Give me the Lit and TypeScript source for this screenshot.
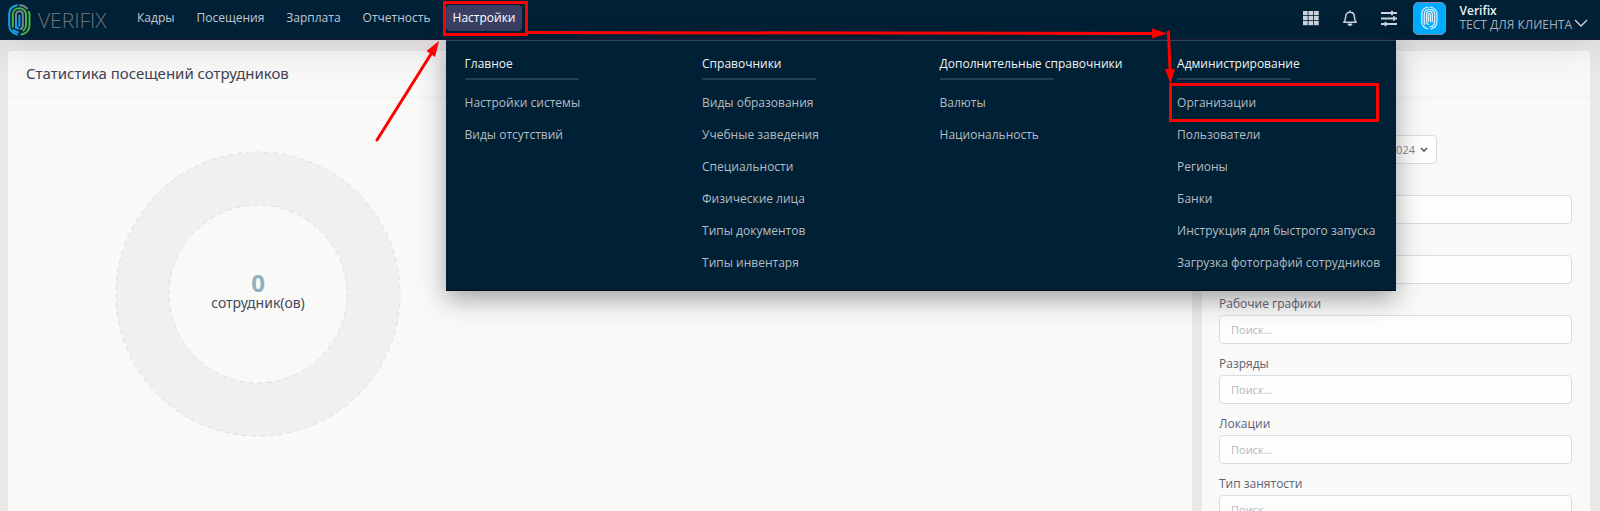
import { LitElement, html, css, svg } from "lit";
import { customElement } from "lit/decorators.js";

interface MenuGroup {
  title: string;
  items: string[];
}

const NAV = ["Кадры", "Посещения", "Зарплата", "Отчетность"];

const GROUPS: MenuGroup[] = [
  { title: "Главное", items: ["Настройки системы", "Виды отсутствий"] },
  {
    title: "Справочники",
    items: [
      "Виды образования",
      "Учебные заведения",
      "Специальности",
      "Физические лица",
      "Типы документов",
      "Типы инвентаря",
    ],
  },
  { title: "Дополнительные справочники", items: ["Валюты", "Национальность"] },
  {
    title: "Администрирование",
    items: [
      "Организации",
      "Пользователи",
      "Регионы",
      "Банки",
      "Инструкция для быстрого запуска",
      "Загрузка фотографий сотрудников",
    ],
  },
];

const FILTERS = [
  "Подразделения",
  "Должности",
  "Рабочие графики",
  "Разряды",
  "Локации",
  "Тип занятости",
];

@customElement("app-header")
export class AppHeader extends LitElement {
  static styles = css`
    :host {
      display: block;
      position: relative;
      z-index: 2;
      flex: none;
    }
    .bar {
      display: flex;
      align-items: center;
      height: 40px;
      padding: 0 12px 0 8px;
      box-sizing: border-box;
      background: #002035;
      border-bottom: 1px solid #1b1a3c;
      box-shadow: 0 4px 40px rgba(60, 50, 60, 0.16);
    }
    .logo {
      display: flex;
      align-items: center;
      gap: 7px;
      width: 122px;
      height: 36px;
      color: #6f7276;
      font: 300 21px/36px "Open Sans", sans-serif;
      text-decoration: none;
    }
    .logo svg {
      flex: none;
    }
    .nav {
      display: flex;
      gap: 8px;
      flex: 1;
      height: 100%;
      align-items: center;
      padding-bottom: 4px;
      box-sizing: border-box;
    }
    .link {
      display: block;
      padding: 0 7px;
      border: 0;
      border-radius: 4px;
      background: none;
      color: #c1c8d3;
      font: 500 12px/26px "Open Sans", sans-serif;
      text-decoration: none;
      cursor: pointer;
    }
    .active {
      background: #3a3f63;
      color: #fff;
    }
    .tools {
      display: flex;
      align-items: center;
      height: 100%;
      padding-bottom: 3px;
      box-sizing: border-box;
      gap: 12px;
    }
    .icons {
      display: flex;
      gap: 15px;
    }
    .tool {
      display: block;
      width: 24px;
      height: 24px;
      padding: 3px;
      border: 0;
      background: none;
      color: #cdd2dc;
    }
    .tool svg {
      display: block;
    }
    .account {
      display: flex;
      align-items: center;
      gap: 2px;
      padding: 0;
      border: 0;
      background: none;
      color: #a6adbb;
      text-align: left;
      font: 400 12px/14px "Open Sans", sans-serif;
    }
    .avatar {
      display: grid;
      place-items: center;
      width: 33px;
      height: 33px;
      margin-right: 12px;
      border: 1px solid #7f8a9b;
      border-radius: 5px;
      background: #00aaff;
      box-sizing: border-box;
    }
    .name {
      display: block;
      color: #eef1f5;
      font-weight: 600;
    }
    .chevron {
      align-self: flex-end;
    }
    .menu-anchor {
      position: relative;
    }
    .menu {
      position: absolute;
      top: 35px;
      left: 0;
      width: 950px;
      box-sizing: border-box;
      display: grid;
      grid-template-columns: repeat(4, 1fr);
      padding-bottom: 11px;
      border-top: 1px solid #2d4454;
      border-bottom: 1px solid #000b16;
      background: #002035;
      box-shadow: 0 8px 24px rgba(30, 30, 40, 0.4);
    }
    .group {
      padding: 12px 0 0 19px;
      min-width: 0;
    }
    .title {
      margin: 0;
      color: #f0f3f1;
      font: 500 12px/22px "Open Sans", sans-serif;
      white-space: nowrap;
    }
    .title::after {
      content: "";
      display: block;
      width: 114px;
      height: 2px;
      margin-top: 3px;
      background: #263e52;
    }
    .list {
      margin: 7px 0 0;
      padding: 0;
      list-style: none;
    }
    .item {
      color: #b4bdc2;
      font: 500 12px/32px "Open Sans", sans-serif;
      text-decoration: none;
      white-space: nowrap;
      display: block;
    }
  `;

  render() {
    return html`
      <header class="bar">
        <a class="logo" href="#" aria-label="Verifix">
          <svg width="23" height="32" viewBox="0 0 23 32" fill="none" stroke-width="2" stroke-linecap="round">
            <path d="M9 1.200C4.500 2.200 1.200 5.500 1.200 10v11c0 4.500 3.300 8.300 8 9.600" stroke="#19a0e8" />
            <path d="M12 1.200c3 .2 5.500 1.600 7 3.300" stroke="#6f8794" />
            <path d="M20.800 8c.5 1 .7 2 .7 3.500V21c0 5-3.500 8.600-8 9.600" stroke="#4bb648" />
            <path d="M4.800 23V10.500c0-4 3-6.300 6.600-6.300s6.600 2.500 6.600 6.300V21c0 2-.8 4-2.500 5.500" stroke="#4bb648" />
            <path d="M14.800 21v-10.500c0-2-1.400-3.200-3.400-3.200s-3.400 1.200-3.400 3.200V24" stroke="#6f8794" />
            <path d="M8 18v3c0 2 .8 3.300 2.400 3.800" stroke="#19a0e8" />
            <path d="M11.400 22V11.500M5.500 26c1 1.200 2.500 2 4.500 2.200" stroke="#19a0e8" />
            <path d="M14.800 21c0 2-.8 3.500-2 4" stroke="#6f8794" />
          </svg>
          VERIFIX
        </a>
        <nav class="nav">
          ${NAV.map((n) => html`<a class="link" href="#">${n}</a>`)}
          <div class="menu-anchor">
            <button class="link active" aria-expanded="true">Настройки</button>
            <div class="menu">
              ${GROUPS.map(
                (g) => html`<section class="group">
                  <h3 class="title">${g.title}</h3>
                  <ul class="list">
                    ${g.items.map((i) => html`<li><a class="item" href="#">${i}</a></li>`)}
                  </ul>
                </section>`
              )}
            </div>
          </div>
        </nav>
        <div class="tools">
          <div class="icons">
            <button class="tool" aria-label="Приложения">
              <svg width="18" height="18" viewBox="0 0 18 18" fill="currentColor">
                ${[2, 7, 12].map((y) =>
                  [1, 6.5, 12].map((x) => svg`<rect x=${x} y=${y} width="4.700" height="4.200" />`)
                )}
              </svg>
            </button>
            <button class="tool" aria-label="Уведомления">
              <svg width="18" height="18" viewBox="0 0 18 18" fill="none" stroke="currentColor" stroke-width="1.500" stroke-linejoin="round">
                <path d="M9 1.500v1.500M2.800 13.300h12.400c-1.500-1.600-1.800-2.600-1.800-5.300 0-3-1.800-4.700-4.400-4.700S4.600 5 4.600 8c0 2.700-.3 3.700-1.800 5.300z" />
                <path d="M7.300 15.300c.5 1.300 2.900 1.300 3.400 0z" fill="currentColor" />
              </svg>
            </button>
            <button class="tool" aria-label="Параметры">
              <svg width="18" height="18" viewBox="0 0 18 18" stroke="currentColor" stroke-width="1.800">
                <path d="M1 4h16M1 9.500h16M1 15h16M12 1.800v4.400M14 7.300v4.400M5.500 12.800v4.400" />
              </svg>
            </button>
          </div>
          <button class="account">
            <span class="avatar">
              <svg width="17" height="24" viewBox="0 0 23 32" fill="none" stroke="#d8f1ff" stroke-width="1.700" stroke-linecap="round">
                <path d="M9 1.200C4.500 2.200 1.200 5.500 1.200 10v11c0 4.500 3.300 8.300 8 9.600M12 1.200c6 .3 9.500 4.800 9.500 10.300V21c0 5-3.500 8.600-8 9.600" />
                <path d="M5 24.500c-.5-1-.6-2-.6-3.500V10.500c0-4 3-6.300 7-6.300s7 2.500 7 6.300V21c0 4-2.500 6.600-6.500 6.800" />
                <path d="M15.300 21v-10.500c0-2-1.500-3.500-3.900-3.500s-4 1.500-4 3.500V21c0 1.500 1 3 2.600 3.500" />
                <path d="M10 20.500v-9c0-1.800 2.700-1.800 2.700 0v10" />
              </svg>
            </span>
            <span><span class="name">Verifix</span>ТЕСТ ДЛЯ КЛИЕНТА</span>
            <svg class="chevron" width="14" height="18" viewBox="0 0 14 18" fill="none" stroke="#d5dae2" stroke-width="1.300">
              <path d="M1 3l6 6 6-6" />
            </svg>
          </button>
        </div>
      </header>
    `;
  }
}

@customElement("attendance-card")
export class AttendanceCard extends LitElement {
  static styles = css`
    :host {
      display: block;
      background: #f9f9f8;
      border-radius: 4px 4px 0 0;
    }
    .title {
      margin: 0;
      padding: 0 18px 2px;
      border-bottom: 1px solid #efefee;
      color: #3f4254;
      font: 400 15px/44px "Noto Sans", sans-serif;
    }
    .chart {
      display: grid;
      width: 286px;
      margin: 53px 0 0 107px;
    }
    .chart > * {
      grid-area: 1 / 1;
    }
    .label {
      align-self: center;
      padding-bottom: 2px;
      text-align: center;
      color: #464a5c;
      font: 400 14px/20px "Noto Sans", sans-serif;
    }
    .count {
      display: block;
      color: #8fafbf;
      font: 700 24px/20px "Noto Sans", sans-serif;
    }
  `;

  render() {
    return html`
      <h2 class="title">Статистика посещений сотрудников</h2>
      <div class="chart">
        <svg width="286" height="286" viewBox="0 0 286 286" stroke="#dededd" stroke-dasharray="5 4">
          <circle cx="143" cy="143" r="142" fill="#f0f0ef" />
          <circle cx="143" cy="143" r="89" fill="#f9f9f8" />
        </svg>
        <div class="label"><span class="count">0</span>сотрудник(ов)</div>
      </div>
    `;
  }
}

@customElement("filter-card")
export class FilterCard extends LitElement {
  static styles = css`
    :host {
      display: block;
      background: #f9f9f8;
      border-radius: 4px 4px 0 0;
    }
    .head {
      height: 46px;
      border-bottom: 1px solid #efefee;
    }
    .body {
      padding: 37px 18px 16px 17px;
    }
    .period {
      display: flex;
      align-items: center;
      justify-content: flex-end;
      gap: 5px;
      width: 218px;
      height: 29px;
      margin-bottom: 11px;
      padding: 0 8px;
      border: 1px solid #d9dde3;
      border-radius: 4px;
      background: #fefefc;
      color: #7e8299;
      font: 400 11px/16px "Open Sans", sans-serif;
    }
    .field {
      display: block;
      color: #5d6175;
      font: 400 12px/18px "Open Sans", sans-serif;
      margin-bottom: 11px;
    }
    .field input {
      display: block;
      width: 100%;
      height: 29px;
      margin-top: 2px;
      padding: 0 11px;
      box-sizing: border-box;
      border: 1px solid #d9dde3;
      border-radius: 4px;
      background: #fefefc;
      color: #3f4254;
      font: 400 11px/16px "Open Sans", sans-serif;
    }
    .field input::placeholder {
      color: #b5b5c3;
      opacity: 1;
    }
  `;

  render() {
    return html`
      <div class="head"></div>
      <div class="body">
        <button class="period">
          2024
          <svg width="8" height="6" viewBox="0 0 8 6" fill="none" stroke="#555a6c" stroke-width="1.600">
            <path d="M1 1l3 3 3-3" />
          </svg>
        </button>
        ${FILTERS.map(
          (f) => html`<label class="field">${f}<input type="text" placeholder="Поиск..." /></label>`
        )}
      </div>
    `;
  }
}

@customElement("guide-marks")
export class GuideMarks extends LitElement {
  static styles = css`
    :host {
      position: absolute;
      top: 0;
      left: 0;
      z-index: 3;
      pointer-events: none;
    }
    svg {
      display: block;
    }
  `;

  render() {
    return html`
      <svg width="1400" height="160" viewBox="0 0 1400 160" fill="none" stroke="#ff0000" stroke-width="3">
        <rect x="444.500" y="2.500" width="82" height="32" />
        <rect x="1170.500" y="84.500" width="207" height="36" />
        <path d="M377 140L431 54M527 32.500L1154 33.500M1168.500 32L1170 70" stroke-linecap="round" />
        <path d="M439 41l-12.500 10 8.500 6zM1167.500 33.500l-15.500-5v10zM1170.500 84l-5.500-15h10z" fill="#ff0000" stroke="none" />
      </svg>
    `;
  }
}

@customElement("app-root")
export class AppRoot extends LitElement {
  static styles = css`
    :host {
      display: flex;
      flex-direction: column;
      position: relative;
      height: 100vh;
      overflow: hidden;
      background: #e9e8e7;
      font-family: "Open Sans", sans-serif;
    }
    .main {
      flex: 1;
      min-height: 0;
      overflow-y: auto;
      scrollbar-width: none;
      display: grid;
      grid-template-columns: minmax(0, 1fr) 388px;
      gap: 10px;
      padding: 11px 10px 0 8px;
    }
  `;

  render() {
    return html`
      <app-header></app-header>
      <main class="main">
        <attendance-card></attendance-card>
        <filter-card></filter-card>
      </main>
      <guide-marks></guide-marks>
    `;
  }
}
